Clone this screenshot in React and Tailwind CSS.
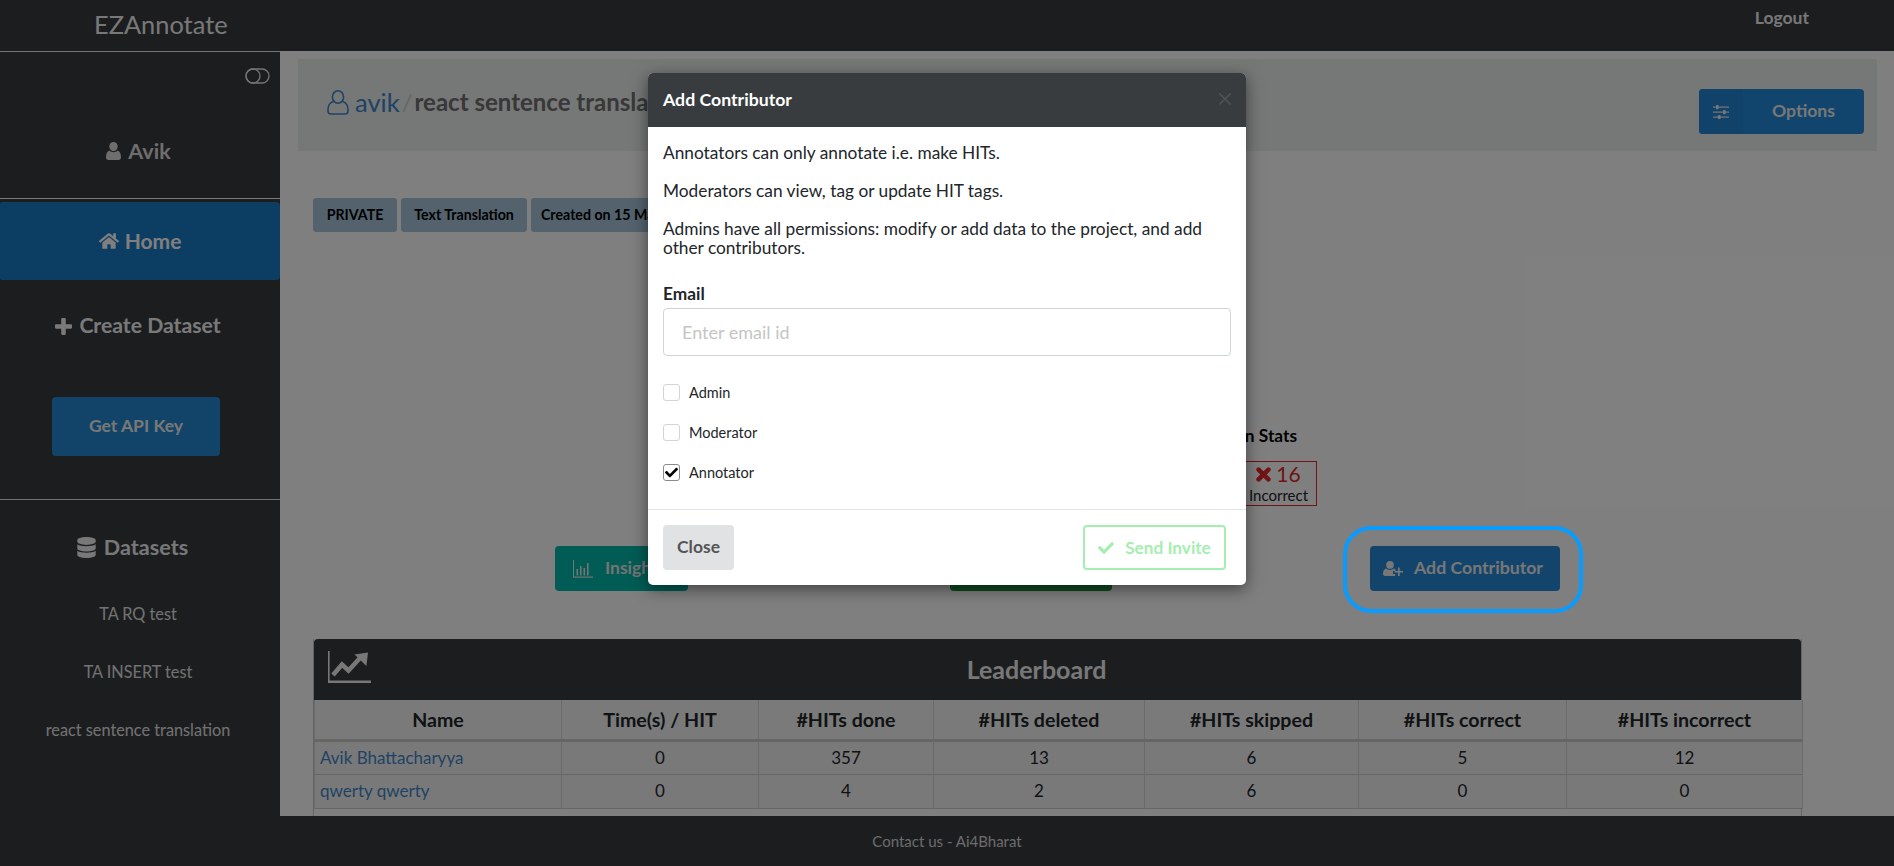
import React from "react";
import { FaHome, FaDatabase, FaCheck } from "react-icons/fa";

function BarChart() {
  return (
    <svg width="20" height="18" viewBox="0 0 20 18" fill="currentColor">
      <rect x="0" y="0" width="1" height="17" />
      <rect x="0" y="16.5" width="20" height="1.2" />
      <rect x="3.5" y="9" width="1.6" height="6.5" />
      <rect x="7" y="6" width="1.6" height="9.5" />
      <rect x="10.5" y="8" width="1.6" height="7.5" />
      <rect x="14" y="3" width="1.6" height="12.5" />
    </svg>
  );
}

function Toggle() {
  return (
    <svg width="25" height="16" viewBox="0 0 25 16" fill="none" stroke="#e8e8e8" strokeWidth="1.3">
      <rect x="1" y="1" width="23" height="14" rx="7" />
      <circle cx="8" cy="8" r="7" />
    </svg>
  );
}

function SolidUser() {
  return (
    <svg width="15" height="18" viewBox="0 0 15 18" fill="currentColor">
      <ellipse cx="7.5" cy="4.6" rx="4.2" ry="4.6" />
      <path d="M0 15.5C0 12 1 9.4 3.4 8.6C4.4 9.6 5.8 10.2 7.5 10.2C9.2 10.2 10.6 9.6 11.6 8.6C14 9.4 15 12 15 15.5C15 17 14 18 12.6 18H2.4C1 18 0 17 0 15.5Z" />
    </svg>
  );
}

function OutlineUser() {
  return (
    <svg width="22" height="25" viewBox="0 0 22 25" fill="none" stroke="currentColor" strokeWidth="1.6">
      <ellipse cx="11" cy="7" rx="5.6" ry="6.2" />
      <path d="M6.5 11.5C3 12.6 1 15 1 19.5V21C1 23 2.4 24 4 24H18C19.6 24 21 23 21 21V19.5C21 15 19 12.6 15.5 11.5" />
    </svg>
  );
}

function ThickPlus() {
  return (
    <svg width="17" height="17" viewBox="0 0 17 17" fill="currentColor">
      <path d="M6.2 1.2C6.2.5 6.7 0 7.4 0H9.6C10.3 0 10.8.5 10.8 1.2V6.2H15.8C16.5 6.2 17 6.7 17 7.4V9.6C17 10.3 16.5 10.8 15.8 10.8H10.8V15.8C10.8 16.5 10.3 17 9.6 17H7.4C6.7 17 6.2 16.5 6.2 15.8V10.8H1.2C.5 10.8 0 10.3 0 9.6V7.4C0 6.7.5 6.2 1.2 6.2H6.2Z" />
    </svg>
  );
}

function ThickX() {
  return (
    <svg width="15" height="15" viewBox="0 0 15 15" fill="none" stroke="currentColor" strokeWidth="4.6" strokeLinecap="round">
      <path d="M2.6 2.6L12.4 12.4M12.4 2.6L2.6 12.4" />
    </svg>
  );
}

function Sliders() {
  return (
    <svg width="16" height="14" viewBox="0 0 16 14" fill="currentColor">
      <rect x="0" y="1.5" width="16" height="1.2" />
      <rect x="0" y="6.5" width="16" height="1.2" />
      <rect x="0" y="11.5" width="16" height="1.2" />
      <rect x="3" y="0" width="2.6" height="4.2" rx="0.6" />
      <rect x="10" y="5" width="2.6" height="4.2" rx="0.6" />
      <rect x="5" y="10" width="2.6" height="4.2" rx="0.6" />
    </svg>
  );
}

function AddUser() {
  return (
    <svg width="20" height="15" viewBox="0 0 20 15" fill="currentColor">
      <ellipse cx="7" cy="3.9" rx="3.8" ry="3.9" />
      <path d="M0 12.5C0 10 1 8.2 3 7.6C4 8.4 5.4 8.9 7 8.9C8.6 8.9 10 8.4 11 7.6C11.6 7.8 12.1 8.1 12.5 8.5V10H10V13H12.2V15H2C.8 15 0 14 0 12.5Z" />
      <rect x="15" y="6.5" width="1.7" height="8.5" />
      <rect x="11.7" y="9.9" width="8.3" height="1.7" />
    </svg>
  );
}

function ChartLine() {
  return (
    <svg width="43" height="32" viewBox="0 0 43 32" fill="currentColor">
      <path d="M0 0H1.6V29.6H43V32H0Z" />
      <path d="M5 24L14 13.5L20.5 19.5L32 7" fill="none" stroke="currentColor" strokeWidth="4.6" />
      <path d="M26.5 3.4L40 1.6L38.4 15Z" />
    </svg>
  );
}

function ThinX() {
  return (
    <svg width="14" height="14" viewBox="0 0 14 14" fill="none" stroke="#505356" strokeWidth="1.6">
      <path d="M1.5 1.5L12.5 12.5M12.5 1.5L1.5 12.5" />
    </svg>
  );
}

const rows = [
  ["Avik Bhattacharyya", 0, 357, 13, 6, 5, 12],
  ["qwerty qwerty", 0, 4, 2, 6, 0, 0],
];
const heads = ["Name", "Time(s) / HIT", "#HITs done", "#HITs deleted", "#HITs skipped", "#HITs correct", "#HITs incorrect"];
const widths = ["w-[247px]", "w-[197px]", "w-[175px]", "w-[211px]", "w-[214px]", "w-[208px]", "w-[236px]"];

export default function App() {
  return (
    <div className="relative h-[866px] w-[1894px] overflow-hidden flex flex-col bg-white text-[#212529] font-['Lato','Liberation_Sans',sans-serif]">
      <header className="h-[51px] shrink-0 bg-[#383a3e] flex items-start justify-between">
        <span className="ml-[94px] mt-[8px] text-[25.4px] leading-[33px] text-[#f0f0f0]">EZAnnotate</span>
        <span className="mr-[85px] mt-[6px] text-[17.5px] leading-[24px] font-bold text-[#f0f0f0]">Logout</span>
      </header>

      <div className="flex flex-1 min-h-0">
        <aside className="w-[280px] shrink-0 bg-[#383a3e] border-t border-[#e8e8e8] text-[#f0f0f0] flex flex-col">
          <div className="h-[147px] shrink-0 relative border-b border-[#f0f0f0] flex justify-center pr-[3px]">
            <span className="absolute right-[10px] top-[16px]"><Toggle /></span>
            <div className="mt-[84px] h-[30px] flex items-center gap-[7px] text-[21.5px] font-bold text-[#dcdcdc]">
              <SolidUser />Avik
            </div>
          </div>
          <div className="mt-[3px] h-[78px] shrink-0 bg-[#187ac6] rounded-r-[4px] rounded-l-[2px] flex items-center justify-center gap-[6px] text-[21px] font-bold text-white">
            <FaHome size={20} />Home
          </div>
          <div className="mt-[31px] h-[30px] flex items-center justify-center gap-[7px] pr-[4px] text-[21.2px] font-bold text-[#f4f4f4]">
            <ThickPlus />Create Dataset
          </div>
          <div className="mt-[56px] ml-[52px] w-[168px] h-[59px] bg-[#2288d0] rounded-[4px] flex items-center justify-center text-[17.5px] font-bold text-[#f0f0f0]">
            Get API Key
          </div>
          <div className="mt-[43px] border-t border-[#e0e0e0]"></div>
          <div className="mt-[32px] h-[30px] flex items-center justify-center gap-[7px] pr-[16px] text-[21.6px] font-bold text-[#f0f0f0]">
            <FaDatabase size={21} />Datasets
          </div>
          <ul className="mt-[40px] pr-[4px] flex flex-col gap-[34px] text-center text-[16.3px] leading-[24px] text-[#e4e4e4]">
            <li>TA RQ test</li>
            <li>TA INSERT test</li>
            <li>react sentence translation</li>
          </ul>
        </aside>

        <main className="flex-1 min-w-0 overflow-hidden pl-[18px] pr-[17px] pt-[8px] bg-white">
          <div className="h-[92px] bg-[#eceeef] flex items-start justify-between pl-[29px] pr-[13px]">
            <h1 className="mt-[25px] flex items-center text-[24px] leading-[36px] font-bold text-[#707070] whitespace-nowrap">
              <span className="text-[#3f86c8] mr-[6px]"><OutlineUser /></span>
              <span className="text-[25.5px] font-normal text-[#3f86c8]">avik</span>
              <span className="font-normal text-[#cfcfcf] mx-[2px]">/</span>
              react sentence translation
            </h1>
            <div className="mt-[30px] w-[165px] h-[45px] bg-[#248adc] rounded-[4px] flex items-stretch text-[17.6px] font-bold text-[#eeeeee]">
              <span className="w-[44px] bg-[#2084d4] rounded-l-[4px] flex items-center justify-center">
                <Sliders />
              </span>
              <span className="flex-1 flex items-center justify-center">Options</span>
            </div>
          </div>

          <div className="mt-[47px] ml-[15px] flex gap-[4px] text-[14.2px] font-bold text-black">
            <span className="h-[34px] w-[84px] bg-[#a6c4da] rounded-[3px] flex items-center justify-center">PRIVATE</span>
            <span className="h-[34px] w-[126px] bg-[#a6c4da] rounded-[3px] flex items-center justify-center">Text Translation</span>
            <span className="h-[34px] w-[190px] bg-[#a6c4da] rounded-[3px] flex items-center pl-[10px] whitespace-nowrap">Created on 15 May 2020</span>
          </div>

          <div className="mt-[192px] ml-[769px] w-[250px] text-right">
            <div className="text-[17.3px] leading-[24px] font-bold pr-[20px] text-black">Annotation Stats</div>
            <div className="mt-[13px] ml-auto w-[77px] h-[45px] border border-[#e0292b] flex flex-col items-center">
              <span className="flex items-center gap-[5px] text-[21px] leading-[24px] text-[#e0292b]"><ThickX />16</span>
              <span className="text-[15px] leading-[18px] whitespace-nowrap">Incorrect</span>
            </div>
          </div>

          <div className="relative h-[85px] mt-[21px]">
            <div className="absolute left-[257px] top-[19px] w-[133px] h-[45px] bg-[#00b8a9] rounded-[4px] flex items-center gap-[12px] pl-[18px] text-[17.5px] font-bold text-[#e8e8e8]">
              <BarChart />Insights
            </div>
            <div className="absolute left-[652px] top-[19px] w-[162px] h-[45px] bg-[#1e943e] rounded-[4px]"></div>
            <div className="absolute left-[1072px] top-[19px] w-[190px] h-[45px] bg-[#2488d8] rounded-[4px] flex items-center gap-[11px] pl-[13px] text-[17.7px] font-bold text-[#eeeeee]">
              <AddUser />Add Contributor
            </div>
          </div>

          <section className="mt-[27px] ml-[15px] w-[1489px] border-x border-[#c8c8c8]">
            <div className="relative h-[61px] bg-[#383a3e] rounded-t-[4px] flex items-center justify-center pr-[42px] text-[25px] font-bold text-[#f0f0f0]">
              <span className="absolute left-[14px] top-[12px] text-[#f0f0f0]"><ChartLine /></span>
              Leaderboard
            </div>
            <table className="w-full table-fixed border-collapse text-[17px] text-center">
              <thead>
                <tr className="h-[40px] border-b-[3px] border-[#cdcdcd] text-[19.6px] font-bold bg-[#f5f5f5]">
                  {heads.map((h, i) => (
                    <th key={h} className={`${widths[i]} border-x border-[#d6d6d6]`}>{h}</th>
                  ))}
                </tr>
              </thead>
              <tbody>
                {rows.map((r) => (
                  <tr key={r[0]} className="h-[34px] border-b border-[#cdcdcd] bg-[#f3f3f3]">
                    {r.map((c, i) => (
                      <td key={i} className={i === 0 ? "border-x border-[#d6d6d6] text-left pl-[5px] text-[#3f86c8]" : "border-x border-[#d6d6d6]"}>{c}</td>
                    ))}
                  </tr>
                ))}
              </tbody>
            </table>
            <div className="h-[20px]"></div>
          </section>
        </main>
      </div>

      <footer className="h-[50px] shrink-0 bg-[#383a3e] flex items-center justify-center text-[15px] text-[#d8d8d8]">
        Contact us - Ai4Bharat
      </footer>

      <div className="absolute inset-0 bg-black/50"></div>

      <div className="absolute left-[1343px] top-[526px] w-[240px] h-[87px] border-[4px] border-[#0a9bff] rounded-[28px]"></div>

      <div className="absolute left-[648px] top-[73px] w-[598px] h-[512px] bg-white rounded-[5px] overflow-hidden shadow-[0_4px_16px_rgba(0,0,0,0.5)] flex flex-col">
        <div className="h-[54px] shrink-0 bg-[#383c3f] pl-[15px] pr-[14px] flex items-center justify-between">
          <span className="text-[17.7px] font-bold text-white">Add Contributor</span>
          <span className="-mt-[3px]"><ThinX /></span>
        </div>
        <div className="flex-1 px-[15px] pt-[16px] text-[17.3px] leading-[19px] text-[#212529]">
          <p>Annotators can only annotate i.e. make HITs.</p>
          <p className="mt-[19px]">Moderators can view, tag or update HIT tags.</p>
          <p className="mt-[19px]">Admins have all permissions: modify or add data to the project, and add other contributors.</p>
          <label className="block mt-[25px] font-bold leading-[24px]">Email</label>
          <div className="mt-[2px] h-[48px] border border-[#ced4da] rounded-[4px] pl-[18px] flex items-center text-[18px] text-[#c5c5c5]">Enter email id</div>
          <div className="mt-[28px] flex flex-col gap-[23px] text-[14.5px]">
            {[["Admin", false], ["Moderator", false], ["Annotator", true]].map(([l, c]) => (
              <div key={l} className="h-[17px] flex items-center gap-[9px]">
                <span className={`w-[17px] h-[17px] rounded-[3px] border ${c ? "border-[#8a8a8a]" : "border-[#d4d4d4]"} flex items-center justify-center`}>
                  {c && <FaCheck size={13} className="text-black" />}
                </span>
                {l}
              </div>
            ))}
          </div>
        </div>
        <div className="h-[76px] shrink-0 border-t border-[#e3e3e3] px-[15px] pr-[20px] flex items-center justify-between">
          <span className="w-[71px] h-[45px] bg-[#e1e2e4] rounded-[4px] flex items-center justify-center text-[17.5px] font-bold text-[#555]">Close</span>
          <span className="w-[143px] h-[45px] border-2 border-[#a6eeb0] rounded-[4px] flex items-center justify-center gap-[11px] text-[17.2px] font-bold text-[#a6eeb0]">
            <FaCheck size={16} />Send Invite
          </span>
        </div>
      </div>
    </div>
  );
}
